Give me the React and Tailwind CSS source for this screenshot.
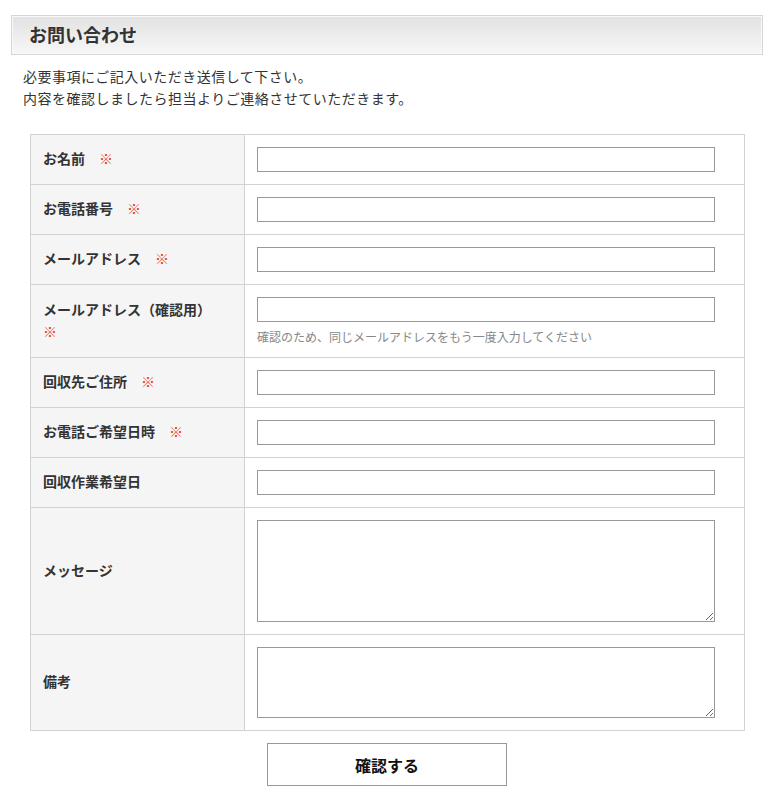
import React from "react";

const font = { fontFamily: '"Noto Sans CJK JP", "Noto Sans", sans-serif' };

function Req() {
  return <span className="ml-[14px] text-[#e8380d] font-normal">※</span>;
}

function Row({ label, req, children, twoLine }) {
  return (
    <div className="flex border-t border-[#d2d2d2] first:border-t-0">
      <div className="w-[214px] shrink-0 bg-[#f5f5f5] border-r border-[#d2d2d2] flex items-center pl-[12px] pr-2 pb-[3px] text-[14px] font-bold text-[#333] leading-[22px]">
        {twoLine ? (
          <div>
            <div>{label}</div>
            <div className="text-[#e8380d] font-normal">※</div>
          </div>
        ) : (
          <div>
            {label}
            {req && <Req />}
          </div>
        )}
      </div>
      <div className="flex-1 py-[12px] pl-[12px]">{children}</div>
    </div>
  );
}

function Input() {
  return <input type="text" className="block w-[458px] h-[25px] border border-[#999] bg-white outline-none" />;
}

export default function App() {
  return (
    <div className="w-[777px] h-[792px] bg-white text-[#333]" style={font}>
      <div className="pt-[15px] pl-[11px] pr-[14px]">
        <div className="h-[40px] border border-[#d6d6d6] bg-gradient-to-b from-[#e2e2e2] to-[#f7f7f7] shadow-[inset_0_0_0_1px_#f9f9f9] flex items-center pl-[17px] pb-[3px]">
          <h1 className="text-[18px] font-bold text-[#333] leading-none">お問い合わせ</h1>
        </div>
      </div>
      <div className="pl-[23px] pt-[10px] text-[14px] leading-[22px] text-[#333] tracking-[0.5px]">
        <p>必要事項にご記入いただき送信して下さい。</p>
        <p>内容を確認しましたら担当よりご連絡させていただきます。</p>
      </div>
      <div className="ml-[30px] mt-[25px] w-[715px] border border-[#d2d2d2]">
        <Row label="お名前" req>
          <Input />
        </Row>
        <Row label="お電話番号" req>
          <Input />
        </Row>
        <Row label="メールアドレス" req>
          <Input />
        </Row>
        <Row label="メールアドレス（確認用）" twoLine>
          <Input />
          <p className="mt-[6px] text-[12px] leading-[17px] text-[#888]">確認のため、同じメールアドレスをもう一度入力してください</p>
        </Row>
        <Row label="回収先ご住所" req>
          <Input />
        </Row>
        <Row label="お電話ご希望日時" req>
          <Input />
        </Row>
        <Row label="回収作業希望日">
          <Input />
        </Row>
        <Row label="メッセージ">
          <textarea className="block w-[458px] h-[102px] border border-[#999] bg-white outline-none" />
        </Row>
        <Row label="備考">
          <textarea className="block w-[458px] h-[71px] border border-[#999] bg-white outline-none" />
        </Row>
      </div>
      <div className="flex pt-[12px] pl-[267px]">
        <button className="w-[240px] h-[43px] border border-[#999] bg-white text-[16px] font-bold text-[#111]">確認する</button>
      </div>
    </div>
  );
}
